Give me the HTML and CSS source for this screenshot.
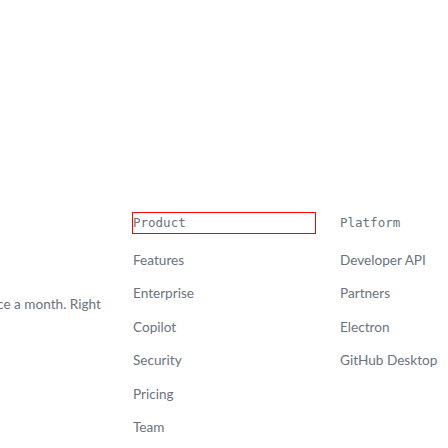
FILE: index.html
```html
<!DOCTYPE html>
<html>
<head>
<meta charset="utf-8">
<link rel="stylesheet" href="styles.css">
</head>
<body>
<div class="footer">
  <div class="intro">
    <p class="intro-text">Subscribe to our developer newsletter once a month. Right</p>
  </div>
  <nav class="col col-product">
    <h2 class="col-title is-focused">Product</h2>
    <ul class="links">
      <li>Features</li>
      <li>Enterprise</li>
      <li>Copilot</li>
      <li>Security</li>
      <li>Pricing</li>
      <li>Team</li>
    </ul>
  </nav>
  <nav class="col col-platform">
    <h2 class="col-title">Platform</h2>
    <ul class="links">
      <li>Developer API</li>
      <li>Partners</li>
      <li>Electron</li>
      <li>GitHub Desktop</li>
    </ul>
  </nav>
</div>
</body>
</html>
```
FILE: styles.css
```css
html, body {
  margin: 0;
  padding: 0;
  background: #ffffff;
}
body {
  color: #6a737d;
  font-family: Lato, "Open Sans", sans-serif;
  font-size: 13.6px;
}
.footer {
  display: flex;
  align-items: flex-start;
  padding-top: 213px;
}
.intro {
  width: 101px;
  flex: none;
  display: flex;
  justify-content: flex-end;
  overflow: hidden;
  padding-top: 81px;
}
.intro-text {
  margin: 0;
  white-space: nowrap;
  line-height: 20px;
}
.col {
  flex: none;
}
.col-product {
  width: 182px;
  margin-left: 32px;
}
.col-platform {
  margin-left: 25px;
}
.col-title {
  margin: 0 0 17px;
  font-family: "DejaVu Sans Mono", monospace;
  font-size: 12.5px;
  font-weight: normal;
  line-height: 20px;
}
.is-focused {
  outline: 1px solid #ff0000;
}
.links {
  list-style: none;
  margin: 0;
  padding: 0;
  display: flex;
  flex-direction: column;
  gap: 13.4px;
}
.links li {
  line-height: 20px;
}
```
